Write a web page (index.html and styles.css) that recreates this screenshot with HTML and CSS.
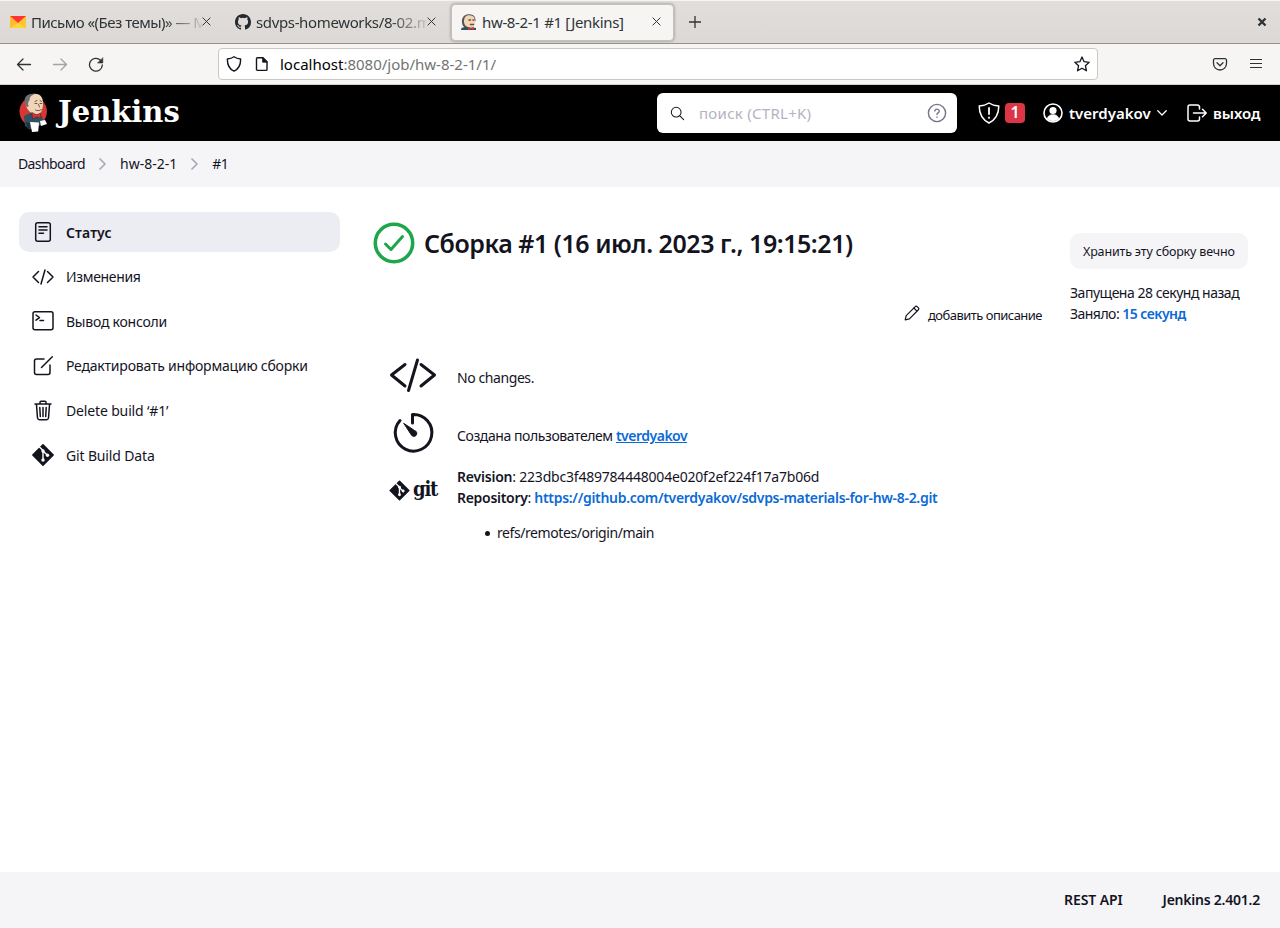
FILE: index.html
```html
<!DOCTYPE html>
<html lang="ru">
<head>
<meta charset="utf-8">
<title>hw-8-2-1 #1 [Jenkins]</title>
<link rel="stylesheet" href="styles.css">
</head>
<body>
<div class="tabs">
  <div class="tab tab-mail">
    <svg class="fav" viewBox="0 0 16 16"><path fill="#ffd43b" d="M0 2h16v12H0z"/><path fill="#ffbd2e" d="M0 2l8 7-8 5z"/><path fill="#ffc52e" d="M16 2L8 9l8 5z"/><path fill="#f33" d="M0 2h16L8 9z"/></svg>
    <span class="tab-title fade"><span class="t-mail">Письмо «(Без темы)» — М</span></span>
    <svg class="x" viewBox="0 0 10 10"><path d="M1 1l8 8M9 1L1 9"/></svg>
  </div>
  <div class="tab tab-gh">
    <svg class="fav" viewBox="0 0 16 16"><path fill="#24292f" d="M8 0C3.58 0 0 3.58 0 8c0 3.54 2.29 6.53 5.47 7.59.4.07.55-.17.55-.38 0-.19-.01-.82-.01-1.49-2.01.37-2.53-.49-2.69-.94-.09-.23-.48-.94-.82-1.13-.28-.15-.68-.52-.01-.53.63-.01 1.08.58 1.23.82.72 1.21 1.87.87 2.33.66.07-.52.28-.87.51-1.07-1.78-.2-3.64-.89-3.64-3.95 0-.87.31-1.59.82-2.15-.08-.2-.36-1.02.08-2.12 0 0 .67-.21 2.2.82a7.6 7.6 0 0 1 4 0c1.53-1.04 2.2-.82 2.2-.82.44 1.1.16 1.92.08 2.12.51.56.82 1.27.82 2.15 0 3.07-1.87 3.75-3.65 3.95.29.25.54.73.54 1.48 0 1.07-.01 1.93-.01 2.2 0 .21.15.46.55.38A8.01 8.01 0 0 0 16 8c0-4.42-3.58-8-8-8z"/></svg>
    <span class="tab-title fade"><span class="t-gh">sdvps-homeworks/8-02.m</span></span>
    <svg class="x" viewBox="0 0 10 10"><path d="M1 1l8 8M9 1L1 9"/></svg>
  </div>
  <div class="tab tab-active">
    <svg class="fav" viewBox="0 0 16 16"><path fill="#335061" d="M0 16l.5-2 4.500-1.500L15 14v2z"/><path fill="#5a5552" d="M1.500 11C-.5 4 3 .3 8 .3c4 0 6.500 2 6.500 6L12 13H3z"/><path fill="#f0d6b7" d="M3 7.500C3 3 5 1.200 8.500 1.200c4 0 5.500 2.800 5.500 6s-.5 6.300-4.500 6.300S3 11 3 7.500z"/><path fill="none" stroke="#6d4c3d" d="M8 6h1.500m2.500 0h1M9.500 10.500h3"/><path fill="#d33833" d="M7 13l3 1 3-1v3l-3-1-3 1z"/></svg>
    <span class="tab-title"><span class="t-jen">hw-8-2-1 #1 [Jenkins]</span></span>
    <svg class="x" viewBox="0 0 10 10"><path d="M1 1l8 8M9 1L1 9"/></svg>
  </div>
  <svg class="plus" viewBox="0 0 12 12"><path d="M6 0v12M0 6h12"/></svg>
  <svg class="winclose" viewBox="0 0 10 10"><path d="M1.500 1.500l7 7M8.500 1.500l-7 7"/></svg>
</div>
<div class="toolbar">
  <svg class="nav" viewBox="0 0 16 16"><path d="M14.500 8.500H1.500M7 3L1.500 8.500 7 14"/></svg>
  <svg class="nav nav-off" viewBox="0 0 16 16"><path d="M1.500 8.500h13M9 3l5.500 5.500L9 14"/></svg>
  <svg class="nav" viewBox="0 0 16 16"><path d="M14.300 9A6.400 6.400 0 1 1 12.500 4.300"/><path class="solid" stroke-width=".6" d="M14.800 2v5H9.800z"/></svg>
  <div class="url">
    <svg class="ui" viewBox="0 0 16 16"><path d="M8 .8C6 2.200 3.600 2.800 1.400 3c-.2 5 1 9.600 6.600 12.200C13.600 12.600 14.800 8 14.600 3 12.400 2.800 10 2.200 8 .8z"/></svg>
    <svg class="ui page" viewBox="0 0 16 16"><path d="M3.500 1.800H9l4 4v7.600a1 1 0 0 1-1 1H3.500a1 1 0 0 1-1-1V2.800a1 1 0 0 1 1-1z"/><path class="solid" stroke-width=".8" d="M8.600 1.800v4.400H13z"/></svg>
    <span class="address"><b>localhost</b>:8080/job/hw-8-2-1/1/</span>
    <svg class="ui star" viewBox="0 0 16 16"><path d="M8 1l2.100 4.700 5.100.6-3.800 3.400 1.100 5.100L8 12.200l-4.500 2.600 1.100-5.100L.8 6.300l5.100-.6z"/></svg>
  </div>
  <svg class="pocket" viewBox="0 0 16 16"><path d="M3 2.700h10a1.500 1.500 0 0 1 1.500 1.500V7.500a6.500 6.500 0 0 1-13 0V4.200A1.500 1.500 0 0 1 3 2.700z"/><path d="M5 6.800l3 2.900 3-2.900"/></svg>
  <svg class="menu" viewBox="0 0 12 12"><path d="M0 1.500h12M0 5.500h12M0 9.500h12"/></svg>
</div>
<header class="header">
  <svg class="butler" viewBox="0 0 30 40"><ellipse cx="14.200" cy="18.500" rx="13.700" ry="14.500" fill="#d33833"/><path d="M5 23l6-3 11 2 3 6-2 4-3 1-1 3h-8L6 33z" fill="#335061"/><path d="M7 29l4 1v7l-3-2z" fill="#1f3340"/><path d="M6.500 10C6 3.500 10 .8 15.500 .8 21 .8 24 4 24 10c0 7-2 11.500-6.500 11.500S7 17 6.500 10z" fill="#f0d6b7"/><path d="M10 1.500C4.500 3 4.500 10 8 14l1.800-.8c-1.500-2.500-.3-4.800.7-6 0-3 1.500-5 5-6-2-.9-4-.3-5.500.3z" fill="#6b6e72"/><path d="M16 8.500l2-1m3 0l1.500 1M16 10.500h2m3 0h2m-3.500 1l1 2.500m-4 3c2 1 4 1 6-.5" fill="none" stroke="#49372c" stroke-width=".8"/><path d="M13 19.500l4.500 2.300 4-1.500.5 5-4.500-1.500-3.500 2z" fill="#d33833" stroke="#571615" stroke-width=".5"/><path d="M11 29l9 .5-.8 9-6.200.5-1-5zM21 28l5-1 2 4-6 2z" fill="#fff"/></svg>
  <span class="brand">Jenkins</span>
  <div class="search">
    <svg class="glass" viewBox="0 0 16 16"><circle cx="6.600" cy="6.600" r="5.200"/><path d="M10.500 10.500l4 4"/></svg>
    <span class="ph">поиск (CTRL+K)</span>
    <svg class="help" viewBox="0 0 20 20"><circle cx="10" cy="10" r="8.600"/><path d="M7.800 8a2.200 2 0 1 1 3.300 1.900c-.8.500-1.100.8-1.100 1.700"/><path d="M10 13.900v.4"/></svg>
  </div>
  <svg class="shield" viewBox="0 0 22 22"><path d="M11 1C8 3 4.500 3.800 1.200 4c0 7 2 13 9.800 17 7.800-4 9.800-10 9.800-17C17.500 3.800 14 3 11 1z"/><path d="M11 6v6M11 15.500v.4" stroke-width="1.800"/></svg>
  <span class="badge">1</span>
  <svg class="person" viewBox="0 0 20 20"><circle cx="10" cy="10" r="9"/><circle class="solid" cx="10" cy="7.500" r="2.800"/><path class="solid" stroke-width=".5" d="M4 15.800c1-3.200 3.200-4.300 6-4.300s5 1.100 6 4.300A8.500 8.500 0 0 1 10 18a8.500 8.500 0 0 1-6-2.200z"/></svg>
  <span class="user">tverdyakov</span>
  <svg class="chev" viewBox="0 0 10 6"><path d="M.8.8L5 5 9.200.8"/></svg>
  <svg class="exit" viewBox="0 0 20 18"><path d="M12.500 5V3.200A2 2 0 0 0 10.500 1H3a2 2 0 0 0-2 2v12a2 2 0 0 0 2 2h7.500a2 2 0 0 0 2-2v-2M6.500 9H19M15.500 5.200L19.200 9l-3.700 3.800"/></svg>
  <span class="logout">выход</span>
</header>
<nav class="crumbs">
  <span class="c1">Dashboard</span>
  <svg class="sep" viewBox="0 0 7 12"><path d="M1 1l5 5-5 5"/></svg>
  <span class="c2">hw-8-2-1</span>
  <svg class="sep" viewBox="0 0 7 12"><path d="M1 1l5 5-5 5"/></svg>
  <span class="c3">#1</span>
</nav>
<div class="body">
  <aside class="side">
    <div class="task current"><svg class="ti" viewBox="0 0 24 24"><rect x="4.700" y="2.700" width="14.600" height="18.600" rx="2"/><path d="M8 6.700h8M8 10h8M8 13.300h4.500"/></svg><span class="s1">Статус</span></div>
    <div class="task"><svg class="ti" viewBox="0 0 24 24"><path d="M7.500 6.500L2 12l5.500 5.500M16.500 6.500L22 12l-5.500 5.500M14 5l-4 14"/></svg><span class="s2">Изменения</span></div>
    <div class="task"><svg class="ti" viewBox="0 0 24 24"><rect x="2" y="2.700" width="20" height="18" rx="2"/><path d="M5 6l3.500 2.600L5 11.200M9 11.500h3.500"/></svg><span class="s3">Вывод консоли</span></div>
    <div class="task"><svg class="ti" viewBox="0 0 24 24"><path d="M13 5H5.500A2 2 0 0 0 3.500 7v11.500a2 2 0 0 0 2 2H17a2 2 0 0 0 2-2V11M10.500 13.500L20 4M20.300 3.700l1-1"/></svg><span class="s4">Редактировать информацию сборки</span></div>
    <div class="task"><svg class="ti" viewBox="0 0 24 24"><path d="M5.500 6l1 13a2 2 0 0 0 2 1.700h7a2 2 0 0 0 2-1.700l1-13M4 5h16M9 5V3.300a1 1 0 0 1 1-1h4a1 1 0 0 1 1 1V5M12 8.500v9M8.800 8.500l.5 9M15.200 8.500l-.5 9"/></svg><span class="s5">Delete build ‘#1’</span></div>
    <div class="task"><svg class="ti" viewBox="0 0 24 24"><path class="solid" d="M12 1.800L22.200 12 12 22.200 1.800 12z"/><path class="branch" d="M8.500 4L12 7.500V17M12 8l4.500 4.300"/><circle class="dot" cx="12" cy="8" r="1.700"/><circle class="dot" cx="12" cy="17" r="1.700"/><circle class="dot" cx="16.500" cy="12.300" r="1.700"/></svg><span class="s6">Git Build Data</span></div>
  </aside>
  <main class="main">
    <div class="top">
      <div class="top-left">
        <div class="heading"><svg class="ok" viewBox="0 0 42 42"><circle cx="21" cy="21" r="18.700" stroke-width="3.500"/><path d="M12.500 22l5.500 5.500L29.500 14.500" stroke-width="3"/></svg><h1>Сборка #1 (16 июл. 2023 г., 19:15:21)</h1></div>
        <div class="desc"><svg class="pencil" viewBox="0 0 16 16"><path d="M1.200 14.800l1-4.200L11 1.800a1.700 1.700 0 0 1 2.400 0l.8.800a1.700 1.700 0 0 1 0 2.400l-8.800 8.800zM9.800 3l3.200 3.200"/></svg><span class="d1">добавить описание</span></div>
      </div>
      <div class="top-right">
        <div class="keep"><span class="k1">Хранить эту сборку вечно</span></div>
        <div class="line"><span class="k2">Запущена 28 секунд назад</span></div>
        <div class="line"><span class="k3">Заняло: <a>15 секунд</a></span></div>
      </div>
    </div>
    <div class="row changes"><svg class="big" viewBox="0 0 48 48"><path d="M16 13.500L2.500 24 16 35M32 13.500L45.500 24 32 35M28.500 9l-9 30.500"/></svg><p><span class="m1">No changes.</span></p></div>
    <div class="row cause"><svg class="big" viewBox="0 0 48 48"><path d="M23.500 14V5.500A18.300 18.300 0 1 1 11 11.500"/><path class="solid" stroke-width="1" d="M15 14.500l10.500 7a3 3 0 1 1-3.500 4z"/></svg><p><span class="m2">Создана пользователем <a class="u">tverdyakov</a></span></p></div>
    <div class="row git">
      <div class="gitlogo"><svg viewBox="0 0 22 22"><path class="solid" d="M11 1.200L20.800 11 11 20.800 1.200 11z"/><path class="branch" d="M7.500 4L11 7.500v8M11 8l4 4"/><circle class="dot" cx="11" cy="7.500" r="1.500"/><circle class="dot" cx="11" cy="15.500" r="1.500"/><circle class="dot" cx="14.800" cy="11.500" r="1.500"/></svg><span>git</span></div>
      <div><p><span class="m3"><b>Revision</b>: 223dbc3f489784448004e020f2ef224f17a7b06d</span></p><p><span class="m4"><b>Repository</b>: <a>https://github.com/tverdyakov/sdvps-materials-for-hw-8-2.git</a></span></p>
      <ul><li><span class="m5">refs/remotes/origin/main</span></li></ul></div>
    </div>
  </main>
</div>
<footer class="footer"><span class="f1">REST API</span><span class="f2">Jenkins 2.401.2</span></footer>
</body>
</html>
```
FILE: styles.css
```css
* { box-sizing: border-box; }
body { margin: 0; width: 1280px; height: 928px; overflow: hidden; display: flex; flex-direction: column; background: #fff; color: #14141f; font: 14px/21px "Noto Sans", sans-serif; }
svg { display: block; flex: none; fill: none; stroke: currentColor; stroke-width: 1.5; stroke-linecap: round; stroke-linejoin: round; }
.solid { fill: currentColor; }
p, h1, ul { margin: 0; padding: 0; }
span { white-space: nowrap; }
a { color: #0b6ad6; font-weight: 600; }
b { font-weight: 600; }

.tabs { height: 44px; flex: none; display: flex; align-items: center; border-top: 1px solid #f6f5f4; border-bottom: 1px solid #93928e; background: linear-gradient(#e1dedb, #dcd8d5); color: #2e3436; font-size: 15px; }
.tab { display: flex; align-items: center; height: 37px; }
.tab-mail { width: 225px; padding-left: 10px; }
.tab-gh { width: 226px; padding-left: 10px; }
.tab-active { width: 223px; padding-left: 9px; background: #f6f5f4; border: 1px solid #c4c0bc; border-radius: 4px; box-shadow: 0 0 3px #8a8784; }
.fav { width: 16px; height: 16px; stroke: none; margin-right: 5px; }
.tab-title { width: 171px; overflow: hidden; }
.fade { -webkit-mask-image: linear-gradient(90deg, #000 78%, transparent 103%); mask-image: linear-gradient(90deg, #000 78%, transparent 103%); }
.tab-active .tab-title { width: 170px; }
.t-mail { letter-spacing: -.53px; }
.t-gh { letter-spacing: -.36px; }
.t-jen { letter-spacing: -.34px; }
.x { width: 9px; height: 9px; stroke-width: 1.1; margin-bottom: 1px; }
.plus { width: 12px; height: 12px; margin-left: 15px; stroke-linecap: butt; stroke-width: 1.3; }
.winclose { width: 10px; height: 10px; margin-left: auto; margin-right: 13px; stroke-width: 2.4; stroke-linecap: butt; }

.toolbar { height: 41px; flex: none; display: flex; align-items: center; padding-left: 16px; background: #f6f5f4; border-bottom: 1px solid #d5d0cc; color: #2e3436; }
.nav { width: 16px; height: 16px; margin-right: 20px; stroke-width: 1.3; }
.nav-off { color: #a3a3a2; }
.url { width: 880px; height: 32px; margin-left: 94px; padding-left: 7px; display: flex; align-items: center; background: #fff; border: 1px solid #cdc7c2; border-radius: 4px; color: #15141a; }
.ui { width: 16px; height: 16px; stroke-width: 1.4; }
.page { margin-left: 12px; }
.address { margin-left: 10px; font-size: 15px; color: #737373; }
.address b { color: #000; font-weight: 400; }
.star { margin-left: auto; margin-right: 7px; stroke-width: 1.3; }
.pocket { width: 16px; height: 16px; margin-left: 114px; stroke-width: 1.3; }
.menu { width: 12px; height: 12px; margin-left: 22px; stroke-width: 1.2; stroke-linecap: butt; }

.header { height: 56px; flex: none; display: flex; align-items: center; background: #000; color: #fff; padding-left: 19px; font-weight: 600; font-size: 15px; }
.butler { width: 30px; height: 40px; stroke: none; }
.brand { margin: 0 0 2px 9px; width: 122px; font: bold 29px/36px "DejaVu Serif", serif; }
.search { margin-left: 477px; width: 300px; height: 40px; display: flex; align-items: center; padding-left: 13px; border-radius: 6px; background: #fff; font-weight: 400; }
.glass { width: 15px; height: 15px; color: #14141f; stroke-width: 1.1; }
.ph { margin-left: 14px; color: #b3b3c2; letter-spacing: .28px; }
.help { width: 20px; height: 20px; margin-left: auto; margin-right: 10px; color: #73738c; stroke-width: 1.4; }
.shield { width: 22px; height: 22px; margin-left: 21px; }
.badge { width: 20px; height: 20px; margin-left: 5px; border-radius: 4px; background: #dc3545; text-align: center; font-size: 16px; line-height: 19px; }
.person { width: 20px; height: 20px; margin-left: 18px; stroke-width: 1.6; }
.user { margin-left: 6px; width: 82px; }
.chev { width: 10px; height: 6px; margin-left: 6px; stroke-width: 1.3; }
.exit { width: 20px; height: 18px; margin-left: 20px; }
.logout { margin-left: 6px; }

.crumbs { height: 46px; flex: none; display: flex; align-items: center; padding-left: 18px; background: #f5f5f8; }
.crumbs span { padding-bottom: 2px; }
.sep { width: 7px; height: 12px; color: #a9a9b8; margin: 0 14px; stroke-width: 1.7; }
.c1 { letter-spacing: -.6px; }
.c3 { letter-spacing: -.6px; }

.body { flex: 1; display: flex; padding: 25px 32px 0 19px; }
.side { width: 321px; display: flex; flex-direction: column; gap: 4.670px; }
.task { height: 40px; flex: none; display: flex; align-items: center; padding-left: 12px; border-radius: 10px; }
.task span { margin-left: 11px; }
.ti { width: 24px; height: 24px; stroke-width: 1.5; }
.current { background: #ecedf3; font-weight: 600; }
.branch { stroke: #fff; stroke-width: 1.4; }
.dot { fill: #fff; stroke: none; }
.s1 { letter-spacing: .1px; }
.s2 { letter-spacing: -.33px; }
.s3 { letter-spacing: -.23px; }
.s4 { letter-spacing: -.21px; }
.s5, .s6 { letter-spacing: -.15px; }

.main { flex: 1; padding-left: 33px; }
.top { display: flex; justify-content: space-between; height: 139px; }
.top-left { width: 669px; padding-top: 10px; display: flex; flex-direction: column; }
.heading { display: flex; align-items: center; height: 42px; gap: 9px; }
.ok { width: 42px; height: 42px; color: #1ea64b; }
h1 { font-size: 25px; line-height: 36px; font-weight: 600; letter-spacing: -.46px; white-space: nowrap; }
.desc { display: flex; justify-content: flex-end; align-items: center; height: 21px; margin-top: 41px; font-size: 13px; gap: 8px; }
.pencil { width: 16px; height: 16px; margin-bottom: 5px; stroke-width: 1.2; }
.d1 { letter-spacing: -.53px; }
.top-right { width: 178px; padding-top: 21px; }
.keep { height: 36px; margin-bottom: 13px; padding: 8px 13px; border-radius: 10px; background: #f5f5f8; font-size: 12.5px; }
.k1 { letter-spacing: -.17px; }
.line { height: 21px; }
.k2 { letter-spacing: -.48px; }
.k3 { letter-spacing: -.53px; }
.row { display: flex; padding-left: 16px; gap: 20px; }
.big { width: 48px; height: 48px; stroke-width: 3; }
.changes { height: 58px; }
.cause { height: 57px; }
.changes p, .cause p { padding-top: 16px; }
.u { text-decoration: underline; letter-spacing: -.5px; }
.m1, .m2, .m5 { letter-spacing: -.42px; }
.m3 { letter-spacing: -.21px; }
.m4 { letter-spacing: -.3px; }
.gitlogo { width: 48px; height: 48px; display: flex; align-items: center; gap: 3px; font: bold 20px/24px "DejaVu Serif Condensed", "DejaVu Serif", serif; font-stretch: condensed; }
.gitlogo svg { width: 21px; height: 21px; }
.gitlogo span { width: 24px; padding-bottom: 3px; letter-spacing: -1.2px; }
ul { margin-top: 14px; padding-left: 40px; list-style: none; }
li::before { content: ""; display: inline-block; width: 5px; height: 5px; margin: 0 7px 2px -12px; border-radius: 50%; background: #14141f; }

.footer { height: 56px; flex: none; display: flex; justify-content: flex-end; align-items: center; gap: 40px; padding: 0 20px 2px 0; background: #f5f5f8; font-weight: 600; }
.f1 { letter-spacing: -.1px; }
.f2 { letter-spacing: -.23px; }
```
